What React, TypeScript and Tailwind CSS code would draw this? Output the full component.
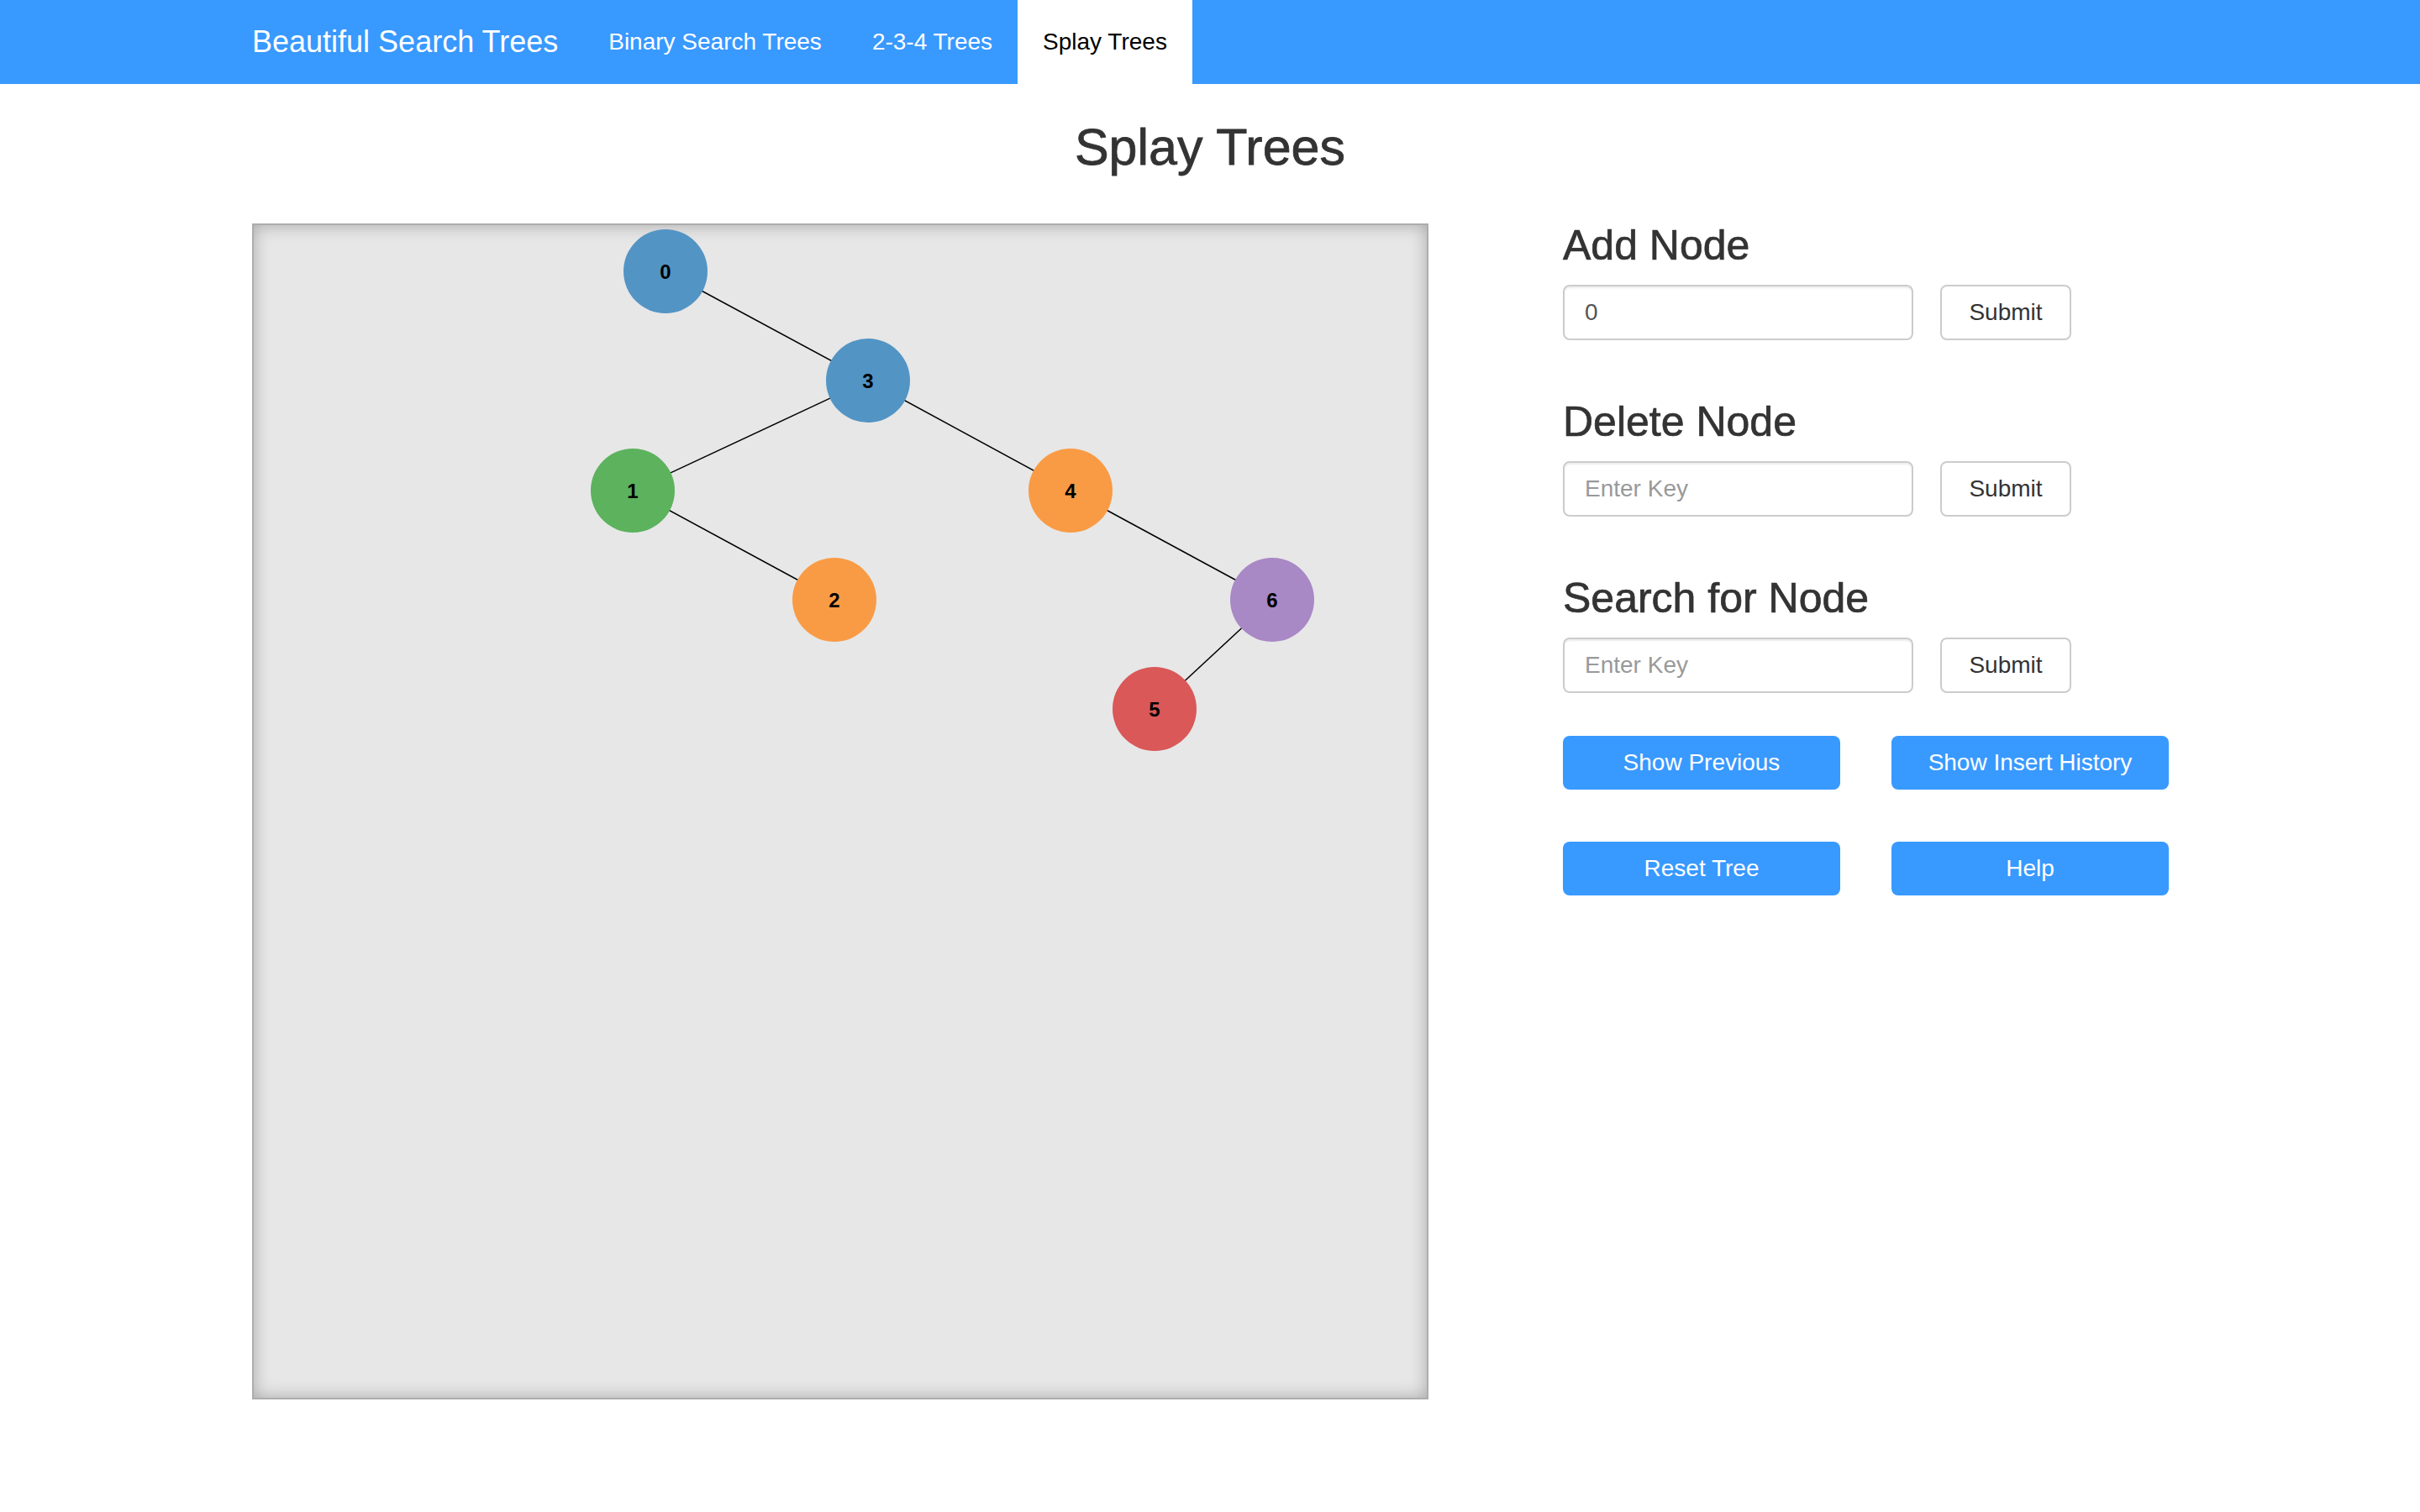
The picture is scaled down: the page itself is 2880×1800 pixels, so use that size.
import { useState } from "react"

type TreeNode = { key: number; x: number; y: number; color: string }

// positions are relative to the canvas content box (inside the 2px border)
const nodes: TreeNode[] = [
  { key: 0, x: 490, y: 55, color: "#5294c4" },
  { key: 3, x: 731, y: 185, color: "#5294c4" },
  { key: 1, x: 451, y: 316, color: "#5cb25d" },
  { key: 4, x: 972, y: 316, color: "#f99b45" },
  { key: 2, x: 691, y: 446, color: "#f99b45" },
  { key: 6, x: 1212, y: 446, color: "#a988c6" },
  { key: 5, x: 1072, y: 576, color: "#da5858" },
]

const edges: [number, number][] = [
  [0, 3],
  [3, 1],
  [3, 4],
  [1, 2],
  [4, 6],
  [6, 5],
]

function TreeCanvas() {
  const byKey = (k: number) => nodes.find((n) => n.key === k)!

  return (
    <div className="relative w-[1400px] h-[1400px] shrink-0 border-2 border-[#adadad] bg-[#e7e7e7] shadow-[inset_0_0_20px_rgba(0,0,0,0.28)]">
      <svg width="1396" height="1396" viewBox="0 0 1396 1396" className="block">
        {edges.map(([a, b]) => {
          const p = byKey(a)
          const c = byKey(b)
          return <line key={`${a}-${b}`} x1={p.x} y1={p.y} x2={c.x} y2={c.y} stroke="#000" strokeWidth={1.5} />
        })}
        {nodes.map((n) => (
          <g key={n.key}>
            <circle cx={n.x} cy={n.y} r={50} fill={n.color} />
            <text
              x={n.x}
              y={n.y + 9}
              textAnchor="middle"
              fontFamily="'Liberation Sans', Arial, sans-serif"
              fontWeight="bold"
              fontSize="24"
              fill="#000"
            >
              {n.key}
            </text>
          </g>
        ))}
      </svg>
    </div>
  )
}

function NodeForm({ title, value, first }: { title: string; value?: string; first?: boolean }) {
  const [val, setVal] = useState(value ?? "")

  return (
    <section className={first ? "" : "mt-[71px]"}>
      <h3 className="text-[50px] leading-[53px] text-[#333] [-webkit-text-stroke:0.7px_#333]">{title}</h3>
      <div className="mt-[20px] flex gap-[32px]">
        <input
          value={val}
          onChange={(e) => setVal(e.target.value)}
          placeholder="Enter Key"
          className="w-[417px] h-[66px] px-[24px] text-[28px] text-[#555] placeholder:text-[#999] bg-white border-2 border-[#ccc] rounded-[8px] shadow-[inset_0_2px_2px_rgba(0,0,0,0.075)] outline-none"
        />
        <button className="w-[156px] h-[66px] text-[28px] text-[#333] bg-white border-2 border-[#ccc] rounded-[8px]">
          Submit
        </button>
      </div>
    </section>
  )
}

export default function App() {
  const links = [
    { label: "Binary Search Trees", active: false },
    { label: "2-3-4 Trees", active: false },
    { label: "Splay Trees", active: true },
  ]

  return (
    <div className="min-h-screen bg-white text-[#333] font-['Liberation_Sans',Arial,sans-serif]">
      <nav className="h-[100px] bg-[#3899ff]">
        <div className="w-[2340px] h-full mx-auto flex">
          <a className="px-[30px] flex items-center text-[36px] text-white">Beautiful Search Trees</a>
          {links.map((link) => (
            <a
              key={link.label}
              className={
                link.active
                  ? "px-[30px] flex items-center text-[28px] text-black bg-white"
                  : "px-[30px] flex items-center text-[28px] text-white"
              }
            >
              {link.label}
            </a>
          ))}
        </div>
      </nav>

      <main className="w-[2340px] mx-auto px-[30px] pb-[100px]">
        <h1 className="mt-[42px] text-center text-[61px] leading-[66px] text-[#333] [-webkit-text-stroke:0.8px_#333]">
          Splay Trees
        </h1>

        <div className="mt-[58px] flex gap-[160px]">
          <TreeCanvas />

          <div className="w-[720px]">
            <NodeForm title="Add Node" value="0" first />
            <NodeForm title="Delete Node" />
            <NodeForm title="Search for Node" />

            <div className="mt-[51px] grid grid-cols-[330px_330px] gap-x-[61px] gap-y-[62px]">
              {["Show Previous", "Show Insert History", "Reset Tree", "Help"].map((label) => (
                <button key={label} className="h-[64px] rounded-[8px] bg-[#3899ff] text-white text-[28px]">
                  {label}
                </button>
              ))}
            </div>
          </div>
        </div>
      </main>
    </div>
  )
}
